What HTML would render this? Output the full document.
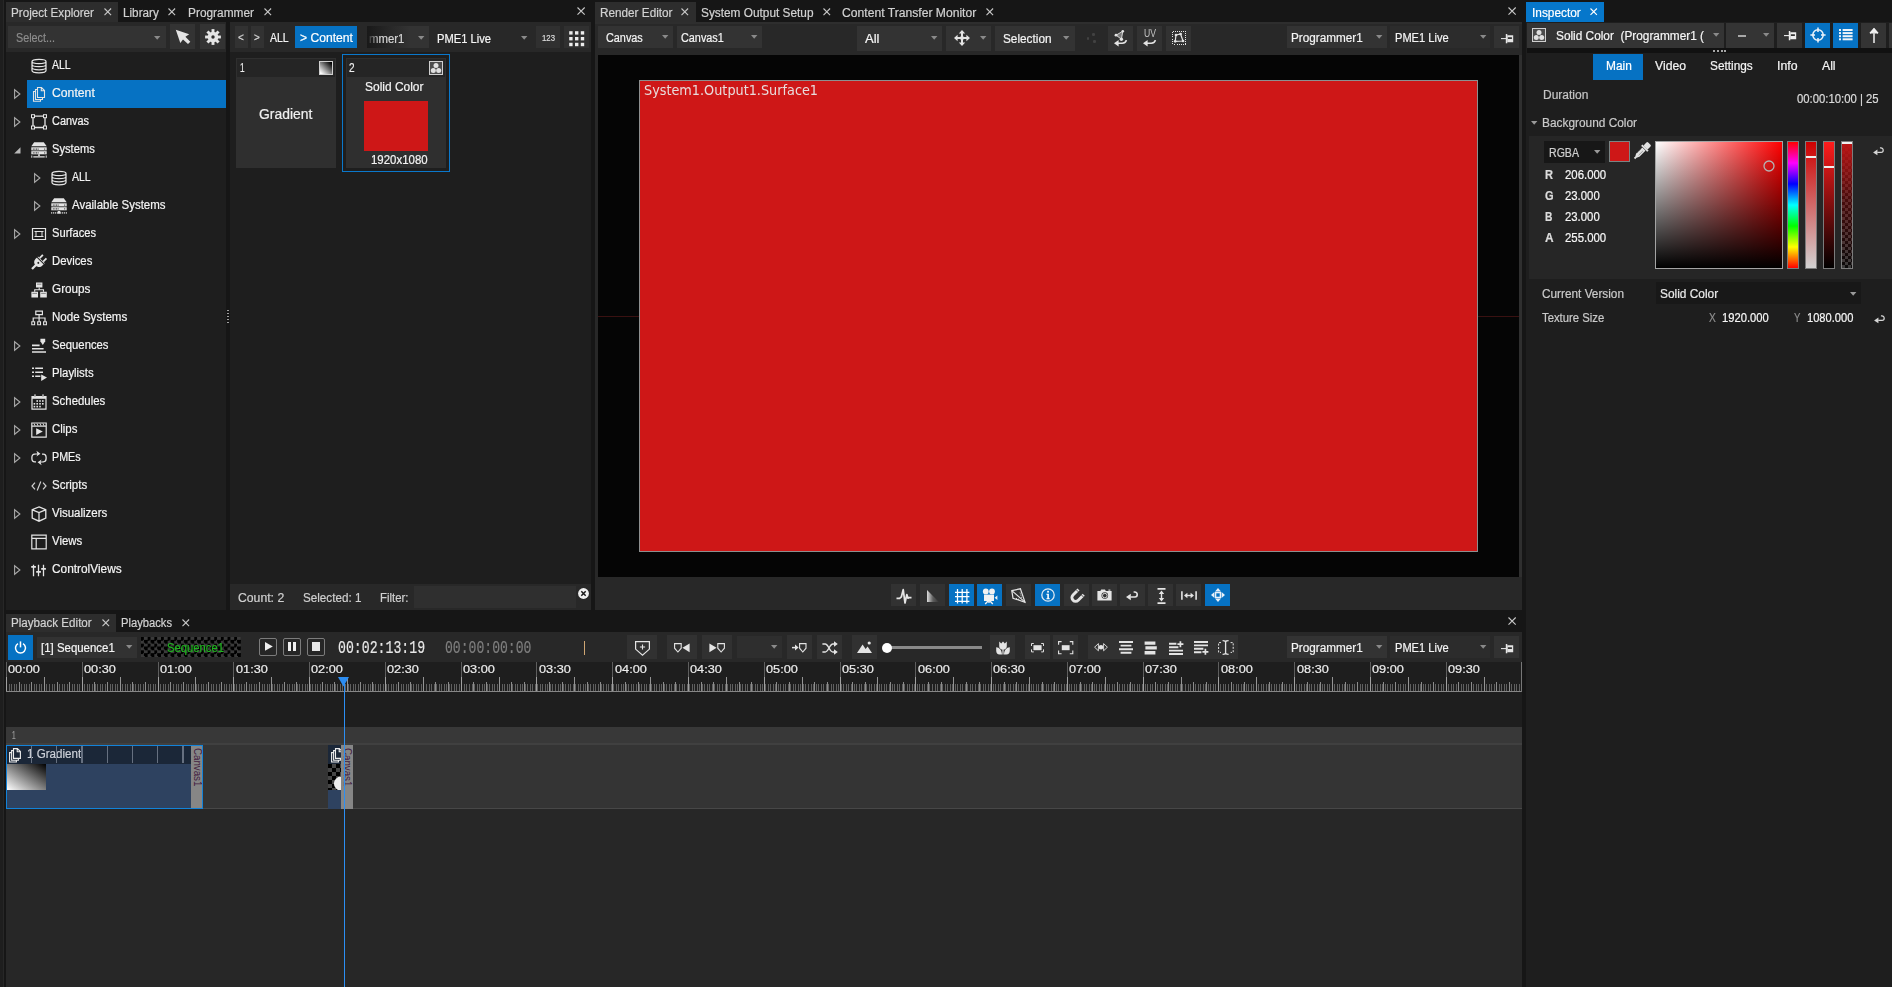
<!DOCTYPE html>
<html lang="en"><head><meta charset="utf-8"><title>UI</title><style>
html,body{margin:0;padding:0}
body{width:1892px;height:987px;position:relative;overflow:hidden;background:#161616;font-family:"Liberation Sans",sans-serif;font-size:12px}
body div,body svg{position:absolute}
svg{overflow:visible}
.t{white-space:nowrap;line-height:16px;transform-origin:0 50%;-webkit-text-stroke:0.2px}
</style></head><body>
<div style="left:0px;top:0px;width:3.3px;height:987px;background:#1e1e1e;"></div>
<div style="left:2.6px;top:0px;width:0.8px;height:987px;background:#272727;"></div>
<div style="left:6px;top:0px;width:585px;height:22px;background:#161616;"></div>
<div style="left:6px;top:2px;width:112px;height:20px;background:#2d2d2d;"></div>
<div style="left:6px;top:22px;width:220px;height:30px;background:#282828;"></div>
<div style="left:230px;top:22px;width:361px;height:30px;background:#282828;"></div>
<div style="left:6px;top:52px;width:220px;height:558px;background:#1e1e1e;"></div>
<div style="left:230px;top:52px;width:361px;height:532px;background:#1e1e1e;"></div>
<div style="left:230px;top:584px;width:361px;height:26px;background:#282828;"></div>
<div style="left:595px;top:0px;width:927px;height:22px;background:#161616;"></div>
<div style="left:595px;top:2px;width:101px;height:20px;background:#2d2d2d;"></div>
<div style="left:595px;top:22px;width:927px;height:588px;background:#282828;"></div>
<div style="left:595px;top:22px;width:927px;height:1.8px;background:#2e2e2e;"></div>
<div style="left:1519px;top:55px;width:3px;height:522px;background:#2f2f2f;"></div>
<div style="left:598px;top:55px;width:921px;height:522px;background:#050505;"></div>
<div style="left:1526px;top:0px;width:366px;height:22px;background:#161616;"></div>
<div style="left:1526px;top:22px;width:366px;height:965px;background:#1e1e1e;"></div>
<div style="left:6px;top:610px;width:1516px;height:22px;background:#161616;"></div>
<div style="left:6px;top:614px;width:110px;height:18px;background:#2d2d2d;"></div>
<div style="left:6px;top:632px;width:1516px;height:30px;background:#282828;"></div>
<div style="left:6px;top:662px;width:1516px;height:65px;background:#1e1e1e;"></div>
<div style="left:6px;top:727px;width:1516px;height:17px;background:#383838;"></div>
<div style="left:6px;top:744px;width:1516px;height:65px;background:#343434;"></div>
<div style="left:6px;top:809px;width:1516px;height:178px;background:#272727;"></div>
<div style="left:6px;top:743.4px;width:1516px;height:1.4px;background:#404040;"></div>
<div style="left:6px;top:808px;width:1516px;height:1.2px;background:#474747;"></div>
<div class="t" style="top:4.84px;font-size:12px;color:#d2d2d2;left:11.3px;transform:scaleX(0.9722);">Project Explorer</div>
<svg style="left:104px;top:8.2px;" width="7.6" height="7.6" viewBox="0 0 7.6 7.6"><path d="M0.5 0.5L7.1 7.1M7.1 0.5L0.5 7.1" stroke="#c8c8c8" stroke-width="1.1" fill="none"/></svg>
<div class="t" style="top:4.84px;font-size:12px;color:#d2d2d2;left:123.3px;transform:scaleX(0.9758);">Library</div>
<svg style="left:168.2px;top:8.2px;" width="7.6" height="7.6" viewBox="0 0 7.6 7.6"><path d="M0.5 0.5L7.1 7.1M7.1 0.5L0.5 7.1" stroke="#c8c8c8" stroke-width="1.1" fill="none"/></svg>
<div class="t" style="top:4.84px;font-size:12px;color:#d2d2d2;left:188.3px;transform:scaleX(0.9897);">Programmer</div>
<svg style="left:263.8px;top:8.2px;" width="7.6" height="7.6" viewBox="0 0 7.6 7.6"><path d="M0.5 0.5L7.1 7.1M7.1 0.5L0.5 7.1" stroke="#c8c8c8" stroke-width="1.1" fill="none"/></svg>
<svg style="left:576.9px;top:7px;" width="8.2" height="8.2" viewBox="0 0 8.2 8.2"><path d="M0.5 0.5L7.699999999999999 7.699999999999999M7.699999999999999 0.5L0.5 7.699999999999999" stroke="#c8c8c8" stroke-width="1.1" fill="none"/></svg>
<div style="left:8px;top:26px;width:158px;height:22px;background:#333333;"></div>
<div class="t" style="top:30.34px;font-size:12px;color:#8c8c8c;left:16px;transform:scaleX(0.8995);">Select...</div>
<svg style="left:153.5px;top:35.5px;" width="6.4" height="3.8" viewBox="0 0 6.4 3.8"><path d="M0 0H6.4L3.2 3.8Z" fill="#8a8a8a"/></svg>
<div style="left:170px;top:24px;width:25px;height:25px;background:#333333;"></div>
<svg style="left:170px;top:24px;" width="25" height="25" viewBox="0 0 25 25"><path d="M5.8 5.8L19.2 10.3L15.4 12.7L20.3 17.8L18 20L13 15.4L10.3 19Z" fill="#e4e4e4"/></svg>
<div style="left:200px;top:24px;width:25px;height:25px;background:#333333;"></div>
<svg style="left:204.5px;top:28.5px;" width="16" height="16" viewBox="0 0 16 16"><g transform="translate(8 8)"><rect x="-1.45" y="-7.9" width="2.9" height="4" fill="#e4e4e4" transform="rotate(0)"/><rect x="-1.45" y="-7.9" width="2.9" height="4" fill="#e4e4e4" transform="rotate(45)"/><rect x="-1.45" y="-7.9" width="2.9" height="4" fill="#e4e4e4" transform="rotate(90)"/><rect x="-1.45" y="-7.9" width="2.9" height="4" fill="#e4e4e4" transform="rotate(135)"/><rect x="-1.45" y="-7.9" width="2.9" height="4" fill="#e4e4e4" transform="rotate(180)"/><rect x="-1.45" y="-7.9" width="2.9" height="4" fill="#e4e4e4" transform="rotate(225)"/><rect x="-1.45" y="-7.9" width="2.9" height="4" fill="#e4e4e4" transform="rotate(270)"/><rect x="-1.45" y="-7.9" width="2.9" height="4" fill="#e4e4e4" transform="rotate(315)"/><circle r="5.3" fill="#e4e4e4"/><circle r="1.7" fill="#2c2c2c"/></g></svg>
<svg style="left:31px;top:58px;" width="16" height="16" viewBox="0 0 16 16"><path d="M1 3.4C1 0.6 15 0.6 15 3.4C15 6.2 1 6.2 1 3.4Z M1 3.4V12.6C1 15.6 15 15.6 15 12.6V3.4 M1 6.5C1 9.4 15 9.4 15 6.5 M1 9.6C1 12.5 15 12.5 15 9.6" fill="none" stroke="#e4e4e4" stroke-width="1.25"/></svg>
<div class="t" style="top:57.14px;font-size:12px;color:#f4f4f4;left:52px;transform:scaleX(0.8755);">ALL</div>
<div style="left:27px;top:80px;width:199px;height:28px;background:#0672c3;"></div>
<svg style="left:13.5px;top:88.9px;" width="7" height="10" viewBox="0 0 7 10"><path d="M0.6 0.7L5.9 5L0.6 9.3Z" fill="none" stroke="#a8a8a8" stroke-width="1.1"/></svg>
<svg style="left:31px;top:86px;" width="16" height="16" viewBox="0 0 16 16"><path d="M6.5 1.5H10.5L13.5 4.5V11.5H6.5Z M10.3 1.7V4.7H13.3" fill="none" stroke="#e4e4e4" stroke-width="1.1"/><path d="M6.5 3.5H4.5V13.5H11.5V11.5 M4.5 5.5H2.5V15.2H9.5V13.5" fill="none" stroke="#e4e4e4" stroke-width="1.1"/></svg>
<div class="t" style="top:85.14px;font-size:12px;color:#f4f4f4;left:52px;transform:scaleX(1.0183);">Content</div>
<svg style="left:13.5px;top:116.9px;" width="7" height="10" viewBox="0 0 7 10"><path d="M0.6 0.7L5.9 5L0.6 9.3Z" fill="none" stroke="#a8a8a8" stroke-width="1.1"/></svg>
<svg style="left:31px;top:114px;" width="16" height="16" viewBox="0 0 16 16"><path d="M2 2.2H14V13.5H2Z" fill="none" stroke="#e4e4e4" stroke-width="1.3"/><rect x="0.5" y="0.7" width="3" height="3" fill="#1e1e1e" stroke="#e4e4e4" stroke-width="1"/><rect x="0.5" y="12" width="3" height="3" fill="#1e1e1e" stroke="#e4e4e4" stroke-width="1"/><rect x="12.5" y="0.7" width="3" height="3" fill="#1e1e1e" stroke="#e4e4e4" stroke-width="1"/><rect x="12.5" y="12" width="3" height="3" fill="#1e1e1e" stroke="#e4e4e4" stroke-width="1"/></svg>
<div class="t" style="top:113.14px;font-size:12px;color:#f4f4f4;left:52px;transform:scaleX(0.9094);">Canvas</div>
<svg style="left:13.5px;top:147px;" width="7" height="7" viewBox="0 0 7 7"><path d="M6.5 0.2V6.5H0.2Z" fill="#b8b8b8"/></svg>
<svg style="left:31px;top:142px;" width="16" height="16" viewBox="0 0 16 16"><path d="M3.2 0.3H12.8L15.7 4.3H0.3Z" fill="#e4e4e4"/><path d="M0.3 5.3H15.7V8.4H0.3Z" fill="#e4e4e4"/><path d="M0.3 9.2H15.7V12.3H0.3Z" fill="#e4e4e4"/><rect x="1.8" y="6.6" width="1" height="1" fill="#1e1e1e"/><rect x="3.4" y="6.6" width="1" height="1" fill="#1e1e1e"/><rect x="5" y="6.6" width="1" height="1" fill="#1e1e1e"/><rect x="6.6" y="6.6" width="1" height="1" fill="#1e1e1e"/><rect x="13.2" y="6.6" width="1" height="1" fill="#1e1e1e"/><rect x="1.8" y="10.4" width="1" height="1" fill="#1e1e1e"/><rect x="3.4" y="10.4" width="1" height="1" fill="#1e1e1e"/><rect x="5" y="10.4" width="1" height="1" fill="#1e1e1e"/><rect x="6.6" y="10.4" width="1" height="1" fill="#1e1e1e"/><rect x="13.2" y="10.4" width="1" height="1" fill="#1e1e1e"/><path d="M7.2 12.3H8.8V14H7.2Z" fill="#e4e4e4"/><path d="M0.3 13.6H1.3V15.8H0.3Z M14.7 13.6H15.7V15.8H14.7Z M2.3 14.2H13.7V15.6H2.3Z" fill="#e4e4e4"/></svg>
<div class="t" style="top:141.14px;font-size:12px;color:#f4f4f4;left:52px;transform:scaleX(0.9301);">Systems</div>
<svg style="left:33.5px;top:172.9px;" width="7" height="10" viewBox="0 0 7 10"><path d="M0.6 0.7L5.9 5L0.6 9.3Z" fill="none" stroke="#a8a8a8" stroke-width="1.1"/></svg>
<svg style="left:51px;top:170px;" width="16" height="16" viewBox="0 0 16 16"><path d="M1 3.4C1 0.6 15 0.6 15 3.4C15 6.2 1 6.2 1 3.4Z M1 3.4V12.6C1 15.6 15 15.6 15 12.6V3.4 M1 6.5C1 9.4 15 9.4 15 6.5 M1 9.6C1 12.5 15 12.5 15 9.6" fill="none" stroke="#e4e4e4" stroke-width="1.25"/></svg>
<div class="t" style="top:169.14px;font-size:12px;color:#f4f4f4;left:72px;transform:scaleX(0.8755);">ALL</div>
<svg style="left:33.5px;top:200.9px;" width="7" height="10" viewBox="0 0 7 10"><path d="M0.6 0.7L5.9 5L0.6 9.3Z" fill="none" stroke="#a8a8a8" stroke-width="1.1"/></svg>
<svg style="left:51px;top:198px;" width="16" height="16" viewBox="0 0 16 16"><path d="M3.2 0.3H12.8L15.7 4.3H0.3Z" fill="#e4e4e4"/><path d="M0.3 5.3H15.7V8.4H0.3Z" fill="#e4e4e4"/><path d="M0.3 9.2H15.7V12.3H0.3Z" fill="#e4e4e4"/><rect x="1.8" y="6.6" width="1" height="1" fill="#1e1e1e"/><rect x="3.4" y="6.6" width="1" height="1" fill="#1e1e1e"/><rect x="5" y="6.6" width="1" height="1" fill="#1e1e1e"/><rect x="6.6" y="6.6" width="1" height="1" fill="#1e1e1e"/><rect x="13.2" y="6.6" width="1" height="1" fill="#1e1e1e"/><rect x="1.8" y="10.4" width="1" height="1" fill="#1e1e1e"/><rect x="3.4" y="10.4" width="1" height="1" fill="#1e1e1e"/><rect x="5" y="10.4" width="1" height="1" fill="#1e1e1e"/><rect x="6.6" y="10.4" width="1" height="1" fill="#1e1e1e"/><rect x="13.2" y="10.4" width="1" height="1" fill="#1e1e1e"/><path d="M0.3 14H1.2V15.8H0.3Z M2.3 14H3.2V15.8H2.3Z M4.3 14H5.2V15.8H4.3Z M10.8 14H11.7V15.8H10.8Z M12.8 14H13.7V15.8H12.8Z M14.8 14H15.7V15.8H14.8Z M6.2 15.8V14.6C6.2 12.6 9.8 12.6 9.8 14.6V15.8Z" fill="#e4e4e4"/></svg>
<div class="t" style="top:197.14px;font-size:12px;color:#f4f4f4;left:72px;transform:scaleX(0.9558);">Available Systems</div>
<svg style="left:13.5px;top:228.9px;" width="7" height="10" viewBox="0 0 7 10"><path d="M0.6 0.7L5.9 5L0.6 9.3Z" fill="none" stroke="#a8a8a8" stroke-width="1.1"/></svg>
<svg style="left:31px;top:226px;" width="16" height="16" viewBox="0 0 16 16"><path d="M1.5 2.5H14.5V13.5H1.5Z" fill="none" stroke="#e4e4e4" stroke-width="1.2"/><path d="M3.5 5.5H12.5M3.5 10.5H12.5M5 5.5V10.5M11 5.5V10.5" fill="none" stroke="#e4e4e4" stroke-width="1"/></svg>
<div class="t" style="top:225.14px;font-size:12px;color:#f4f4f4;left:52px;transform:scaleX(0.9291);">Surfaces</div>
<svg style="left:31px;top:254px;" width="16" height="16" viewBox="0 0 16 16"><path d="M0.2 14.2L4.4 10L6 11.6L1.8 15.8Z" fill="#e4e4e4"/><g transform="rotate(45 9 7.2)"><path d="M4.2 5.2H13.8V8.6C13.8 11.6 11.6 13.4 9 13.4C6.4 13.4 4.2 11.6 4.2 8.6Z" fill="#e4e4e4"/><path d="M5.6 0.6H7.4V5.2H5.6Z M10.6 0.6H12.4V5.2H10.6Z" fill="#e4e4e4"/><rect x="3.6" y="6" width="11" height="0.9" fill="#1e1e1e"/><circle cx="9" cy="9.6" r="1" fill="#1e1e1e"/></g></svg>
<div class="t" style="top:253.14px;font-size:12px;color:#f4f4f4;left:52px;transform:scaleX(0.9441);">Devices</div>
<svg style="left:31px;top:282px;" width="16" height="16" viewBox="0 0 16 16"><path d="M5 0.6H11.4V5.6H5Z M0.4 9.8H7V15.4H0.4Z M9.2 9.8H15.8V15.4H9.2Z" fill="#e4e4e4"/><path d="M8.2 5.6V7.7M3.7 9.8V7.7H12.5V9.8" fill="none" stroke="#e4e4e4" stroke-width="1.1"/><path d="M6 2.2H10.4M1.4 11.4H6M10.2 11.4H14.8" stroke="#1e1e1e" stroke-width="0.8" opacity="0.6"/></svg>
<div class="t" style="top:281.14px;font-size:12px;color:#f4f4f4;left:52px;transform:scaleX(0.9782);">Groups</div>
<svg style="left:31px;top:310px;" width="16" height="16" viewBox="0 0 16 16"><path d="M4.8 1.2H11.4V4.6H4.8Z M8.1 4.6V8 M2.2 11.6V8H14V11.6 M8.1 8V11.6" fill="none" stroke="#e4e4e4" stroke-width="1.2"/><path d="M0.8 11.8H3.6V14.8H0.8Z M6.7 11.8H9.5V14.8H6.7Z M12.6 11.8H15.4V14.8H12.6Z" fill="none" stroke="#e4e4e4" stroke-width="1.1"/></svg>
<div class="t" style="top:309.14px;font-size:12px;color:#f4f4f4;left:52px;transform:scaleX(0.9650);">Node Systems</div>
<svg style="left:13.5px;top:340.9px;" width="7" height="10" viewBox="0 0 7 10"><path d="M0.6 0.7L5.9 5L0.6 9.3Z" fill="none" stroke="#a8a8a8" stroke-width="1.1"/></svg>
<svg style="left:31px;top:338px;" width="16" height="16" viewBox="0 0 16 16"><path d="M1 6.6H8.6V8.2H1Z M1 9.9H12.6V11.5H1Z M1 13.2H15V14.8H1Z" fill="#e4e4e4"/><path d="M9.4 0.8H14.2V3.2L11.8 7L9.4 3.2Z" fill="#e4e4e4"/></svg>
<div class="t" style="top:337.14px;font-size:12px;color:#f4f4f4;left:52px;transform:scaleX(0.9409);">Sequences</div>
<svg style="left:31px;top:366px;" width="16" height="16" viewBox="0 0 16 16"><path d="M1 1.4H3V3H1Z M4.2 1.4H12V3H4.2Z M1 5.4H3V7H1Z M4.2 5.4H12V7H4.2Z M1 9.4H3V11H1Z M4.2 9.4H9.4V11H4.2Z" fill="#e4e4e4"/><path d="M10.2 8.4L16 11.6L10.2 14.9Z" fill="#e4e4e4"/></svg>
<div class="t" style="top:365.14px;font-size:12px;color:#f4f4f4;left:52px;transform:scaleX(0.9451);">Playlists</div>
<svg style="left:13.5px;top:396.9px;" width="7" height="10" viewBox="0 0 7 10"><path d="M0.6 0.7L5.9 5L0.6 9.3Z" fill="none" stroke="#a8a8a8" stroke-width="1.1"/></svg>
<svg style="left:31px;top:394px;" width="16" height="16" viewBox="0 0 16 16"><path d="M1 2.6H15V15.2H1Z" fill="none" stroke="#e4e4e4" stroke-width="1.2"/><path d="M1 2.6H15V4.8H1Z" fill="#e4e4e4"/><path d="M4 0.4V3M12 0.4V3" fill="none" stroke="#e4e4e4" stroke-width="1.6"/><path d="M4 1.2V2.6M12 1.2V2.6" stroke="#1e1e1e" stroke-width="0.6"/><rect x="5.4" y="6.2" width="1.6" height="1.6" fill="#e4e4e4"/><rect x="8.2" y="6.2" width="1.6" height="1.6" fill="#e4e4e4"/><rect x="11" y="6.2" width="1.6" height="1.6" fill="#e4e4e4"/><rect x="2.6" y="9" width="1.6" height="1.6" fill="#e4e4e4"/><rect x="5.4" y="9" width="1.6" height="1.6" fill="#e4e4e4"/><rect x="8.2" y="9" width="1.6" height="1.6" fill="#e4e4e4"/><rect x="11" y="9" width="1.6" height="1.6" fill="#e4e4e4"/><rect x="2.6" y="11.8" width="1.6" height="1.6" fill="#e4e4e4"/><rect x="5.4" y="11.8" width="1.6" height="1.6" fill="#e4e4e4"/><rect x="8.2" y="11.8" width="1.6" height="1.6" fill="#e4e4e4"/></svg>
<div class="t" style="top:393.14px;font-size:12px;color:#f4f4f4;left:52px;transform:scaleX(0.9492);">Schedules</div>
<svg style="left:13.5px;top:424.9px;" width="7" height="10" viewBox="0 0 7 10"><path d="M0.6 0.7L5.9 5L0.6 9.3Z" fill="none" stroke="#a8a8a8" stroke-width="1.1"/></svg>
<svg style="left:31px;top:422px;" width="16" height="16" viewBox="0 0 16 16"><path d="M0.8 1H15.2V15.2H0.8Z M0.8 4.2H15.2" fill="none" stroke="#e4e4e4" stroke-width="1.2"/><path d="M5.2 6.2L11.8 9.6L5.2 13Z" fill="#e4e4e4"/><path d="M3 1.4L4 3.8M6 1.4L7 3.8M9 1.4L10 3.8M12 1.4L13 3.8" fill="none" stroke="#e4e4e4" stroke-width="0.9"/></svg>
<div class="t" style="top:421.14px;font-size:12px;color:#f4f4f4;left:52px;transform:scaleX(0.9523);">Clips</div>
<svg style="left:13.5px;top:452.9px;" width="7" height="10" viewBox="0 0 7 10"><path d="M0.6 0.7L5.9 5L0.6 9.3Z" fill="none" stroke="#a8a8a8" stroke-width="1.1"/></svg>
<svg style="left:31px;top:450px;" width="16" height="16" viewBox="0 0 16 16"><path d="M4.6 4.2H3.6C1.8 4.2 0.9 5.4 0.9 7.4V8.4C0.9 10.6 2 11.8 3.8 11.8H5" fill="none" stroke="#e4e4e4" stroke-width="1.3"/><path d="M5.4 0.8L9.4 3.8L5.4 6.6L6.4 4.4H4.4V3.4H6.4Z" fill="#e4e4e4"/><path d="M11.4 11.8H12.4C14.2 11.8 15.1 10.6 15.1 8.6V7.6C15.1 5.4 14 4.2 12.2 4.2H11" fill="none" stroke="#e4e4e4" stroke-width="1.3"/><path d="M10.6 15.2L6.6 12.2L10.6 9.4L9.6 11.4H11.6V12.6H9.6Z" fill="#e4e4e4"/></svg>
<div class="t" style="top:449.14px;font-size:12px;color:#f4f4f4;left:52px;transform:scaleX(0.8933);">PMEs</div>
<svg style="left:31px;top:478px;" width="16" height="16" viewBox="0 0 16 16"><path d="M4 4.6L1 8L4 11.4 M12 4.6L15 8L12 11.4 M9.8 3.6L6.2 12.4" fill="none" stroke="#cfcfcf" stroke-width="1.2"/></svg>
<div class="t" style="top:477.14px;font-size:12px;color:#f4f4f4;left:52px;transform:scaleX(0.9595);">Scripts</div>
<svg style="left:13.5px;top:508.9px;" width="7" height="10" viewBox="0 0 7 10"><path d="M0.6 0.7L5.9 5L0.6 9.3Z" fill="none" stroke="#a8a8a8" stroke-width="1.1"/></svg>
<svg style="left:31px;top:506px;" width="16" height="16" viewBox="0 0 16 16"><path d="M8 0.9L14.8 3.6V12.2L8 15.2L1.2 12.2V3.6Z M1.4 3.8L8 6.6L14.6 3.8 M8 6.6V15" fill="none" stroke="#e4e4e4" stroke-width="1.3"/></svg>
<div class="t" style="top:505.14px;font-size:12px;color:#f4f4f4;left:52px;transform:scaleX(0.9548);">Visualizers</div>
<svg style="left:31px;top:534px;" width="16" height="16" viewBox="0 0 16 16"><path d="M0.8 1.2H15.2V14.8H0.8Z M0.8 4.4H15.2 M5.2 4.4V14.8" fill="none" stroke="#e4e4e4" stroke-width="1.2"/></svg>
<div class="t" style="top:533.14px;font-size:12px;color:#f4f4f4;left:52px;transform:scaleX(0.9498);">Views</div>
<svg style="left:13.5px;top:564.9px;" width="7" height="10" viewBox="0 0 7 10"><path d="M0.6 0.7L5.9 5L0.6 9.3Z" fill="none" stroke="#a8a8a8" stroke-width="1.1"/></svg>
<svg style="left:31px;top:562px;" width="16" height="16" viewBox="0 0 16 16"><path d="M2.5 2.8V14.3 M7.5 2.8V14.3 M12.5 2.8V14.3" fill="none" stroke="#e4e4e4" stroke-width="1.3"/><path d="M0.2 4.9H4.9 M5.2 9.9H9.9 M10.2 6.9H14.9" fill="none" stroke="#e4e4e4" stroke-width="1.6"/></svg>
<div class="t" style="top:561.14px;font-size:12px;color:#f4f4f4;left:52px;transform:scaleX(0.9889);">ControlViews</div>
<div style="left:227.4px;top:309.6px;width:1.3px;height:1.4px;background:#a0a0a0;"></div>
<div style="left:227.4px;top:312.7px;width:1.3px;height:1.4px;background:#a0a0a0;"></div>
<div style="left:227.4px;top:315.8px;width:1.3px;height:1.4px;background:#a0a0a0;"></div>
<div style="left:227.4px;top:318.9px;width:1.3px;height:1.4px;background:#a0a0a0;"></div>
<div style="left:227.4px;top:322px;width:1.3px;height:1.4px;background:#a0a0a0;"></div>
<div style="left:235px;top:26px;width:13px;height:22px;background:#323232;"></div>
<div class="t" style="top:29.93px;font-size:10px;color:#d8d8d8;left:238.4px;transform:scaleX(0.9925);">&lt;</div>
<div style="left:251px;top:26px;width:13px;height:22px;background:#323232;"></div>
<div class="t" style="top:29.93px;font-size:10px;color:#d8d8d8;left:254.2px;transform:scaleX(0.9925);">&gt;</div>
<div class="t" style="top:29.64px;font-size:12px;color:#f4f4f4;left:270.2px;transform:scaleX(0.8755);">ALL</div>
<div style="left:295px;top:26px;width:62px;height:22px;background:#0672c3;"></div>
<div class="t" style="top:29.64px;font-size:12px;color:#ffffff;left:300.2px;transform:scaleX(1.0119);">&gt; Content</div>
<div style="left:367px;top:26px;width:62px;height:22px;background:linear-gradient(90deg,#191919 0,#2b2b2b 45%,#333 70%);"></div>
<div class="t" style="top:31.24px;font-size:12px;color:#d4d4d4;left:369.3px;transform:scaleX(0.9479);-webkit-mask-image:linear-gradient(90deg,rgba(0,0,0,.15),#000 30%);mask-image:linear-gradient(90deg,rgba(0,0,0,.15),#000 30%);">mmer1</div>
<svg style="left:417.5px;top:36.2px;" width="6.4" height="3.8" viewBox="0 0 6.4 3.8"><path d="M0 0H6.4L3.2 3.8Z" fill="#8a8a8a"/></svg>
<div style="left:430px;top:26px;width:101px;height:22px;background:#282828;"></div>
<div class="t" style="top:31.24px;font-size:12px;color:#f4f4f4;left:437.3px;transform:scaleX(0.9305);">PME1 Live</div>
<svg style="left:521px;top:36.2px;" width="6.4" height="3.8" viewBox="0 0 6.4 3.8"><path d="M0 0H6.4L3.2 3.8Z" fill="#8a8a8a"/></svg>
<div style="left:536px;top:26px;width:24px;height:22px;background:#303030;"></div>
<div class="t" style="top:29.88px;font-size:9px;color:#dcdcdc;left:541.6px;transform:scaleX(0.8649);">123</div>
<div style="left:564px;top:26px;width:25px;height:22px;background:#303030;"></div>
<svg style="left:569px;top:30.5px;" width="15.2" height="15.2" viewBox="0 0 15.2 15.2"><rect x="0.2" y="0.2" width="3.4" height="3.4" fill="#ececec"/><rect x="0.2" y="6" width="3.4" height="3.4" fill="#ececec"/><rect x="0.2" y="11.8" width="3.4" height="3.4" fill="#ececec"/><rect x="6" y="0.2" width="3.4" height="3.4" fill="#ececec"/><rect x="6" y="6" width="3.4" height="3.4" fill="#ececec"/><rect x="6" y="11.8" width="3.4" height="3.4" fill="#ececec"/><rect x="11.8" y="0.2" width="3.4" height="3.4" fill="#ececec"/><rect x="11.8" y="6" width="3.4" height="3.4" fill="#ececec"/><rect x="11.8" y="11.8" width="3.4" height="3.4" fill="#ececec"/></svg>
<div style="left:236px;top:58px;width:100px;height:110px;background:#2f2f2f;"></div>
<div style="left:237px;top:59px;width:98px;height:18px;background:#252525;"></div>
<div class="t" style="top:59.64px;font-size:12px;color:#f0f0f0;left:239.8px;transform:scaleX(0.6879);">1</div>
<svg style="left:319px;top:61px;" width="14" height="14" viewBox="0 0 14 14"><defs><linearGradient id="gi" x1="0" y1="1" x2="1" y2="0"><stop offset="0.1" stop-color="#fff"/><stop offset="0.9" stop-color="#000"/></linearGradient></defs><rect x="0.5" y="0.5" width="13" height="13" fill="url(#gi)" stroke="#d0d0d0"/></svg>
<div class="t" style="top:104.75px;font-size:14px;color:#f0f0f0;left:259.3px;line-height:18px;transform:scaleX(0.9925);">Gradient</div>
<div style="left:342px;top:54px;width:106px;height:116px;background:none;border:1px solid #0a78cc;"></div>
<div style="left:346px;top:58px;width:100px;height:110px;background:#2f2f2f;"></div>
<div style="left:347px;top:59px;width:98px;height:18px;background:#252525;"></div>
<div class="t" style="top:59.64px;font-size:12px;color:#f0f0f0;left:349px;transform:scaleX(0.8374);">2</div>
<svg style="left:429px;top:61px;" width="14" height="14" viewBox="0 0 14 14"><rect x="0.5" y="0.5" width="13" height="13" fill="#4c4c4c" stroke="#d0d0d0" stroke-width="1"/><circle cx="7" cy="4.4" r="2.5" fill="#e0e0e0"/><circle cx="4.3" cy="9.4" r="2.5" fill="#e0e0e0"/><circle cx="9.7" cy="9.4" r="2.5" fill="#e0e0e0"/></svg>
<div class="t" style="top:78.64px;font-size:12px;color:#f4f4f4;left:365.3px;transform:scaleX(0.9965);">Solid Color</div>
<div style="left:364px;top:101px;width:64px;height:50px;background:#ce1717;"></div>
<div class="t" style="top:151.74px;font-size:12px;color:#f4f4f4;left:370.6px;transform:scaleX(0.9530);">1920x1080</div>
<div class="t" style="top:589.84px;font-size:12px;color:#d0d0d0;left:237.6px;transform:scaleX(1.0182);">Count: 2</div>
<div class="t" style="top:589.84px;font-size:12px;color:#d0d0d0;left:302.5px;transform:scaleX(0.9726);">Selected: 1</div>
<div class="t" style="top:589.84px;font-size:12px;color:#d0d0d0;left:380px;transform:scaleX(0.9500);">Filter:</div>
<div style="left:414px;top:586px;width:162px;height:21.5px;background:#2f2f2f;"></div>
<svg style="left:577.5px;top:588px;" width="11" height="11" viewBox="0 0 11 11"><circle cx="5.5" cy="5.5" r="5.4" fill="#f0f0f0"/><path d="M3.3 3.3L7.7 7.7M7.7 3.3L3.3 7.7" stroke="#1a1a1a" stroke-width="1.5"/></svg>
<div class="t" style="top:4.84px;font-size:12px;color:#d2d2d2;left:600.2px;transform:scaleX(0.9791);">Render Editor</div>
<svg style="left:681px;top:8.2px;" width="7.6" height="7.6" viewBox="0 0 7.6 7.6"><path d="M0.5 0.5L7.1 7.1M7.1 0.5L0.5 7.1" stroke="#c8c8c8" stroke-width="1.1" fill="none"/></svg>
<div class="t" style="top:4.84px;font-size:12px;color:#d2d2d2;left:701px;transform:scaleX(0.9863);">System Output Setup</div>
<svg style="left:823px;top:8.2px;" width="7.6" height="7.6" viewBox="0 0 7.6 7.6"><path d="M0.5 0.5L7.1 7.1M7.1 0.5L0.5 7.1" stroke="#c8c8c8" stroke-width="1.1" fill="none"/></svg>
<div class="t" style="top:4.84px;font-size:12px;color:#d2d2d2;left:842.2px;transform:scaleX(1.0118);">Content Transfer Monitor</div>
<svg style="left:986px;top:8.2px;" width="7.6" height="7.6" viewBox="0 0 7.6 7.6"><path d="M0.5 0.5L7.1 7.1M7.1 0.5L0.5 7.1" stroke="#c8c8c8" stroke-width="1.1" fill="none"/></svg>
<svg style="left:1507.6px;top:7px;" width="8.2" height="8.2" viewBox="0 0 8.2 8.2"><path d="M0.5 0.5L7.699999999999999 7.699999999999999M7.699999999999999 0.5L0.5 7.699999999999999" stroke="#c8c8c8" stroke-width="1.1" fill="none"/></svg>
<div style="left:598px;top:26px;width:75px;height:22px;background:#333333;"></div>
<div class="t" style="top:29.54px;font-size:12px;color:#f4f4f4;left:606.2px;transform:scaleX(0.9045);">Canvas</div>
<svg style="left:661.6px;top:35.2px;" width="6.4" height="3.8" viewBox="0 0 6.4 3.8"><path d="M0 0H6.4L3.2 3.8Z" fill="#8a8a8a"/></svg>
<div style="left:677px;top:26px;width:85px;height:22px;background:#333333;"></div>
<div class="t" style="top:29.54px;font-size:12px;color:#f4f4f4;left:680.7px;transform:scaleX(0.9034);">Canvas1</div>
<svg style="left:750.8px;top:35.2px;" width="6.4" height="3.8" viewBox="0 0 6.4 3.8"><path d="M0 0H6.4L3.2 3.8Z" fill="#8a8a8a"/></svg>
<div style="left:857px;top:26px;width:85px;height:25px;background:#333333;"></div>
<div class="t" style="top:30.54px;font-size:12px;color:#f4f4f4;left:865px;transform:scaleX(1.0867);">All</div>
<svg style="left:930.5px;top:36px;" width="6.4" height="3.8" viewBox="0 0 6.4 3.8"><path d="M0 0H6.4L3.2 3.8Z" fill="#8a8a8a"/></svg>
<div style="left:946px;top:26px;width:45px;height:25px;background:#333333;"></div>
<svg style="left:954px;top:30px;" width="16" height="16" viewBox="0 0 16 16"><g transform="translate(8 8)"><path d="M0 -8L3.2 -4.4H1V-1H-1V-4.4H-3.2Z" fill="#e4e4e4" transform="rotate(0)"/><path d="M0 -8L3.2 -4.4H1V-1H-1V-4.4H-3.2Z" fill="#e4e4e4" transform="rotate(90)"/><path d="M0 -8L3.2 -4.4H1V-1H-1V-4.4H-3.2Z" fill="#e4e4e4" transform="rotate(180)"/><path d="M0 -8L3.2 -4.4H1V-1H-1V-4.4H-3.2Z" fill="#e4e4e4" transform="rotate(270)"/><rect x="-1.6" y="-1.6" width="3.2" height="3.2" fill="#e4e4e4"/></g></svg>
<svg style="left:980px;top:36px;" width="6.4" height="3.8" viewBox="0 0 6.4 3.8"><path d="M0 0H6.4L3.2 3.8Z" fill="#8a8a8a"/></svg>
<div style="left:995px;top:26px;width:80px;height:25px;background:#333333;"></div>
<div class="t" style="top:30.54px;font-size:12px;color:#f4f4f4;left:1003px;transform:scaleX(0.9823);">Selection</div>
<svg style="left:1063.4px;top:36px;" width="6.4" height="3.8" viewBox="0 0 6.4 3.8"><path d="M0 0H6.4L3.2 3.8Z" fill="#8a8a8a"/></svg>
<div style="left:1086.8px;top:37.4px;width:2.4px;height:2.4px;background:#424242;border-radius:50%;"></div>
<div style="left:1092.4px;top:33.4px;width:2.4px;height:2.4px;background:#424242;border-radius:50%;"></div>
<div style="left:1093.4px;top:40.4px;width:2.4px;height:2.4px;background:#424242;border-radius:50%;"></div>
<div style="left:1108px;top:26px;width:25px;height:25px;background:#323232;"></div>
<svg style="left:1113px;top:30px;" width="15" height="17" viewBox="0 0 15 17"><path d="M9.8 1.2L3.1 5.2L8.4 9.2Z" fill="#7a7a7a" stroke="#e4e4e4" stroke-width="0.9"/><circle cx="9.8" cy="1.3" r="1.3" fill="#e4e4e4"/><circle cx="3" cy="5.2" r="1.4" fill="#e4e4e4"/><circle cx="8.4" cy="9.2" r="1.7" fill="#e4e4e4"/><g transform="translate(1 10)"><path d="M0 3.2L4.6 0V6.4Z" fill="#e4e4e4"/><path d="M4 3.2H8.2C10.6 3.2 12 2 12.4 0.2" fill="none" stroke="#e4e4e4" stroke-width="1.6"/></g></svg>
<div style="left:1137px;top:26px;width:25px;height:25px;background:#323232;"></div>
<div class="t" style="top:26.37px;font-size:10.2px;color:#c4c4c4;left:1143.9px;transform:scaleX(0.8477);-webkit-text-stroke:0;">UV</div>
<svg style="left:1143px;top:40px;" width="13" height="6.4" viewBox="0 0 13 6.4"><path d="M0 3.2L4.6 0V6.4Z" fill="#e4e4e4"/><path d="M4 3.2H8.2C10.6 3.2 12 2 12.4 0.2" fill="none" stroke="#e4e4e4" stroke-width="1.6"/></svg>
<div style="left:1166px;top:26px;width:25px;height:25px;background:#323232;"></div>
<svg style="left:1172px;top:31px;" width="14.5" height="14.5" viewBox="0 0 14.5 14.5"><rect x="0.5" y="0.5" width="13.4" height="13.4" fill="none" stroke="#e4e4e4" stroke-width="1" stroke-dasharray="1 1.07" shape-rendering="crispEdges"/><path d="M4 4L8.6 3L11 10L3.2 10.3Z" fill="none" stroke="#e4e4e4" stroke-width="1.2"/><circle cx="4" cy="4" r="1.35" fill="#e4e4e4"/><circle cx="8.6" cy="3" r="1.35" fill="#e4e4e4"/><circle cx="11" cy="10" r="1.35" fill="#e4e4e4"/><circle cx="3.2" cy="10.3" r="1.35" fill="#e4e4e4"/></svg>
<div style="left:1287px;top:26px;width:100px;height:22px;background:#333333;"></div>
<div class="t" style="top:29.54px;font-size:12px;color:#f4f4f4;left:1291.3px;transform:scaleX(0.9787);">Programmer1</div>
<svg style="left:1376px;top:35.2px;" width="6.4" height="3.8" viewBox="0 0 6.4 3.8"><path d="M0 0H6.4L3.2 3.8Z" fill="#8a8a8a"/></svg>
<div style="left:1390px;top:26px;width:100px;height:22px;background:#2c2c2c;"></div>
<div class="t" style="top:29.54px;font-size:12px;color:#f4f4f4;left:1395.4px;transform:scaleX(0.9236);">PME1 Live</div>
<svg style="left:1480px;top:35.2px;" width="6.4" height="3.8" viewBox="0 0 6.4 3.8"><path d="M0 0H6.4L3.2 3.8Z" fill="#8a8a8a"/></svg>
<div style="left:1494px;top:26px;width:25px;height:22px;background:#323232;"></div>
<svg style="left:1500.9px;top:33.9px;" width="13" height="9.4" viewBox="0 0 13 9.4"><path d="M0 4.6H5" stroke="#e4e4e4" stroke-width="1.1"/><rect x="4.8" y="0" width="1.5" height="9.3" fill="#e4e4e4"/><path fill-rule="evenodd" d="M6.2 1.2H12.2V8.2H6.2Z M6.9 3.3H10.9V4.9H6.9Z" fill="#e4e4e4"/></svg>
<div style="left:598px;top:316px;width:921px;height:1px;background:#3a1111;"></div>
<div style="left:639px;top:80px;width:839px;height:472px;background:#ce1717;box-sizing:border-box;border:1px solid #8d8f8f;"></div>
<div class="t" style="top:80.96px;font-size:14px;color:#e8dcdc;left:644.3px;font-family:'DejaVu Sans',sans-serif;line-height:18px;transform:scaleX(0.9168);-webkit-text-stroke:0;">System1.Output1.Surface1</div>
<div style="left:891px;top:584px;width:25px;height:22px;background:#323232;"></div>
<div style="left:920px;top:584px;width:25px;height:22px;background:#323232;"></div>
<div style="left:949px;top:584px;width:25px;height:22px;background:#0672c3;"></div>
<div style="left:977px;top:584px;width:25px;height:22px;background:#0672c3;"></div>
<div style="left:1006px;top:584px;width:25px;height:22px;background:#323232;"></div>
<div style="left:1035px;top:584px;width:25px;height:22px;background:#0672c3;"></div>
<div style="left:1064px;top:584px;width:25px;height:22px;background:#323232;"></div>
<div style="left:1092px;top:584px;width:25px;height:22px;background:#323232;"></div>
<div style="left:1120px;top:584px;width:25px;height:22px;background:#323232;"></div>
<div style="left:1148px;top:584px;width:25px;height:22px;background:#323232;"></div>
<div style="left:1176px;top:584px;width:25px;height:22px;background:#323232;"></div>
<div style="left:1205px;top:584px;width:25px;height:22px;background:#0672c3;"></div>
<svg style="left:895.5px;top:587.5px;" width="16" height="16" viewBox="0 0 16 16"><path d="M0.5 10.4H3.6L5.4 8.8L7.2 1.6L9 15L10.8 6.6L12 10.2L13 9.6H15.5" fill="none" stroke="#e4e4e4" stroke-width="1.75" stroke-linejoin="round"/></svg>
<svg style="left:927px;top:589.5px;" width="12" height="12" viewBox="0 0 12 12"><defs><linearGradient id="gt" x1="0" y1="0" x2="1" y2="0"><stop offset="0" stop-color="#dedede"/><stop offset="0.5" stop-color="#5c5c5c"/><stop offset="1" stop-color="#343434"/></linearGradient></defs><path d="M0 0L12 12H0Z" fill="url(#gt)"/></svg>
<svg style="left:955px;top:589px;" width="15" height="15" viewBox="0 0 15 15"><path d="M2.5 0V14.4M7.2 0V14.4M11.9 0V14.4M0 3.3H14.4M0 7.6H14.4M0 12.3H14.4" stroke="#fff" stroke-width="1.25"/></svg>
<svg style="left:981.5px;top:587.5px;" width="16" height="16" viewBox="0 0 16 16"><circle cx="3.8" cy="3.4" r="2.9" fill="#f2f2f2"/><circle cx="10" cy="3.4" r="2.9" fill="#f2f2f2"/><rect x="2" y="6.6" width="10" height="6.4" fill="#f2f2f2"/><path d="M12.6 9.8L15.4 7.6V12L12.6 9.8Z" fill="#f2f2f2"/><path d="M6 13L3.2 16M8 13L10.8 16M7 13V15" stroke="#f2f2f2" stroke-width="1.4"/></svg>
<svg style="left:1011px;top:588px;" width="15" height="15" viewBox="0 0 15 15"><path d="M0.8 2.6L9.4 0.8L14 14.2L2 10.2Z" fill="none" stroke="#e4e4e4" stroke-width="1.2"/><path d="M0.8 2.6L14 14.2" stroke="#e4e4e4" stroke-width="1.1"/><path d="M9 4.6L11 10.6M5 10.4L8.6 11.6" stroke="#e4e4e4" stroke-width="1" stroke-dasharray="1 1.2"/></svg>
<svg style="left:1040.5px;top:588px;" width="14" height="14" viewBox="0 0 14 14"><circle cx="7" cy="7" r="6.2" fill="none" stroke="#dfe9f2" stroke-width="1.3"/><rect x="6.2" y="2.8" width="1.7" height="1.8" fill="#fff"/><path d="M5.4 5.8H7.9V10.2H8.8V11.2H5.4V10.2H6.3V6.8H5.4Z" fill="#fff"/></svg>
<svg style="left:1068.5px;top:587.5px;" width="16" height="16" viewBox="0 0 16 16"><g transform="translate(7.6 8.6) rotate(45)"><path d="M-3.7 -6.4V1.4A3.7 3.7 0 0 0 3.7 1.4V-6.4" fill="none" stroke="#e4e4e4" stroke-width="2.9"/><path d="M-5.3 -4.6H-2.1M2.1 -4.6H5.3" stroke="#323232" stroke-width="0.8"/></g></svg>
<svg style="left:1097px;top:589px;" width="15" height="12" viewBox="0 0 15 12"><path d="M0.4 2H3.4L4.2 0.6H8L8.8 2H14.6V11.6H0.4Z" fill="#e4e4e4"/><circle cx="7.8" cy="6.6" r="3.3" fill="#323232"/><circle cx="7.8" cy="6.6" r="2.3" fill="none" stroke="#e4e4e4" stroke-width="0.9"/><rect x="11.4" y="0.6" width="2" height="1" fill="#e4e4e4"/></svg>
<svg style="left:1126px;top:590.5px;" width="12" height="10" viewBox="0 0 12 10"><path d="M4.6 6H9C10.8 6 11.2 4.8 11.2 3.6C11.2 2.2 10.4 1 8.6 1H7.6" fill="none" stroke="#e4e4e4" stroke-width="1.6"/><path d="M0 6L4.8 2.8V9.2Z" fill="#e4e4e4"/></svg>
<svg style="left:1156.5px;top:587.5px;" width="9" height="16" viewBox="0 0 9 16"><path d="M0.5 0.9H8.5M0.5 15.1H8.5" stroke="#e4e4e4" stroke-width="1.6"/><path d="M4.5 4V12" stroke="#e4e4e4" stroke-width="1.4"/><path d="M4.5 2.6L7.2 6H1.8ZM4.5 13.4L7.2 10H1.8Z" fill="#e4e4e4"/></svg>
<svg style="left:1180.5px;top:591px;" width="16" height="9" viewBox="0 0 16 9"><path d="M0.9 0.3V8.7M15.1 0.3V8.7" stroke="#e4e4e4" stroke-width="1.6"/><path d="M5 4.5H11" stroke="#e4e4e4" stroke-width="1.4"/><path d="M3 4.5L6.4 1.8V7.2ZM13 4.5L9.6 1.8V7.2Z" fill="#e4e4e4"/></svg>
<svg style="left:1210.5px;top:588px;" width="14" height="14" viewBox="0 0 14 14"><path d="M7 0L10 3.4H4ZM7 14L10 10.6H4ZM0 7L3.4 4V10ZM14 7L10.6 4V10Z" fill="#e8f0f8"/><rect x="4.6" y="4.6" width="4.8" height="4.8" fill="none" stroke="#e8f0f8" stroke-width="1.4"/></svg>
<div style="left:1526px;top:2px;width:78px;height:20px;background:#0677cb;"></div>
<div class="t" style="top:4.84px;font-size:12px;color:#ffffff;left:1531.7px;transform:scaleX(0.9887);">Inspector</div>
<svg style="left:1590px;top:8.3px;" width="7.4" height="7.4" viewBox="0 0 7.4 7.4"><path d="M0.5 0.5L6.9 6.9M6.9 0.5L0.5 6.9" stroke="#ffffff" stroke-width="1.1" fill="none"/></svg>
<div style="left:1527px;top:23px;width:197px;height:25.4px;background:#343434;"></div>
<svg style="left:1532px;top:28.4px;" width="14" height="14" viewBox="0 0 14 14"><rect x="0.5" y="0.5" width="13" height="13" fill="#4c4c4c" stroke="#d0d0d0" stroke-width="1"/><circle cx="7" cy="4.4" r="2.5" fill="#e0e0e0"/><circle cx="4.3" cy="9.4" r="2.5" fill="#e0e0e0"/><circle cx="9.7" cy="9.4" r="2.5" fill="#e0e0e0"/></svg>
<div class="t" style="top:27.64px;font-size:12px;color:#f6f6f6;left:1556px;transform:scaleX(0.9864);">Solid Color&nbsp; (Programmer1 (</div>
<svg style="left:1713px;top:33.2px;" width="6.4" height="3.8" viewBox="0 0 6.4 3.8"><path d="M0 0H6.4L3.2 3.8Z" fill="#8a8a8a"/></svg>
<div style="left:1726px;top:23px;width:48px;height:25.4px;background:#343434;"></div>
<div style="left:1737.8px;top:34.8px;width:8.4px;height:1.8px;background:#a8a8a8;"></div>
<svg style="left:1762.5px;top:33.2px;" width="6.4" height="3.8" viewBox="0 0 6.4 3.8"><path d="M0 0H6.4L3.2 3.8Z" fill="#8a8a8a"/></svg>
<div style="left:1777px;top:23px;width:25px;height:25.4px;background:#343434;"></div>
<svg style="left:1783.8px;top:31px;" width="13" height="9.4" viewBox="0 0 13 9.4"><path d="M0 4.6H5" stroke="#f0f0f0" stroke-width="1.1"/><rect x="4.8" y="0" width="1.5" height="9.3" fill="#f0f0f0"/><path fill-rule="evenodd" d="M6.2 1.2H12.2V8.2H6.2Z M6.9 3.3H10.9V4.9H6.9Z" fill="#f0f0f0"/></svg>
<div style="left:1805px;top:23px;width:25px;height:25.4px;background:#0672c3;"></div>
<svg style="left:1809.5px;top:27.3px;" width="16" height="16" viewBox="0 0 16 16"><circle cx="8" cy="8" r="5.2" fill="none" stroke="#eef4fa" stroke-width="1.5"/><path d="M8 0.4V5M8 11V15.6M0.4 8H5M11 8H15.6" stroke="#eef4fa" stroke-width="1.5"/></svg>
<div style="left:1833px;top:23px;width:25px;height:25.4px;background:#0672c3;"></div>
<svg style="left:1838.8px;top:29px;" width="14" height="12" viewBox="0 0 14 12"><rect x="0" y="0" width="2" height="2" fill="#eef4fa"/><rect x="3.6" y="0" width="10" height="2" fill="#eef4fa"/><rect x="0" y="3.1" width="2" height="2" fill="#eef4fa"/><rect x="3.6" y="3.1" width="10" height="2" fill="#eef4fa"/><rect x="0" y="6.2" width="2" height="2" fill="#eef4fa"/><rect x="3.6" y="6.2" width="10" height="2" fill="#eef4fa"/><rect x="0" y="9.3" width="2" height="2" fill="#eef4fa"/><rect x="3.6" y="9.3" width="10" height="2" fill="#eef4fa"/></svg>
<div style="left:1861px;top:23px;width:25px;height:25.4px;background:#343434;"></div>
<svg style="left:1869px;top:28px;" width="10" height="15" viewBox="0 0 10 15"><path d="M5 3V15" stroke="#f0f0f0" stroke-width="1.5"/><path d="M5 0L9.2 5.4H6L5 4.2L4 5.4H0.8Z" fill="#f0f0f0"/><path d="M1 5.2L5 0.8L9 5.2" fill="none" stroke="#f0f0f0" stroke-width="1.4"/></svg>
<div style="left:1889px;top:23px;width:3px;height:25.4px;background:#343434;"></div>
<div style="left:1527px;top:48.4px;width:365px;height:4.2px;background:#111111;"></div>
<div style="left:1713px;top:50.2px;width:2px;height:1.8px;background:#a6a6a6;"></div>
<div style="left:1716.8px;top:50.2px;width:2px;height:1.8px;background:#a6a6a6;"></div>
<div style="left:1720.6px;top:50.2px;width:2px;height:1.8px;background:#a6a6a6;"></div>
<div style="left:1724.4px;top:50.2px;width:2px;height:1.8px;background:#a6a6a6;"></div>
<div style="left:1593px;top:54px;width:50px;height:26px;background:#0672c3;"></div>
<div class="t" style="top:57.64px;font-size:12px;color:#ffffff;left:1605.5px;transform:scaleX(0.9917);">Main</div>
<div class="t" style="top:57.64px;font-size:12px;color:#f4f4f4;left:1655.4px;transform:scaleX(1.0169);">Video</div>
<div class="t" style="top:57.64px;font-size:12px;color:#f4f4f4;left:1710.3px;transform:scaleX(0.9848);">Settings</div>
<div class="t" style="top:57.64px;font-size:12px;color:#f4f4f4;left:1777px;transform:scaleX(1.0242);">Info</div>
<div class="t" style="top:57.64px;font-size:12px;color:#f4f4f4;left:1821.6px;transform:scaleX(1.0192);">All</div>
<div class="t" style="top:86.94px;font-size:12px;color:#c4c4c4;left:1542.7px;transform:scaleX(0.9987);">Duration</div>
<div class="t" style="top:91.24px;font-size:12px;color:#dcdcdc;left:1797px;transform:scaleX(0.9430);">00:00:10:00 | 25</div>
<svg style="left:1531.2px;top:120.8px;" width="6.4" height="3.8" viewBox="0 0 6.4 3.8"><path d="M0 0H6.4L3.2 3.8Z" fill="#9a9a9a"/></svg>
<div class="t" style="top:114.64px;font-size:12px;color:#cacaca;left:1542.3px;transform:scaleX(0.9889);">Background Color</div>
<div style="left:1529px;top:136px;width:363px;height:143px;background:#262626;"></div>
<div style="left:1544px;top:141px;width:61px;height:22px;background:#171717;"></div>
<div class="t" style="top:145.34px;font-size:12px;color:#cfcfcf;left:1548.7px;transform:scaleX(0.8819);">RGBA</div>
<svg style="left:1593.7px;top:150.2px;" width="6.4" height="3.8" viewBox="0 0 6.4 3.8"><path d="M0 0H6.4L3.2 3.8Z" fill="#9a9a9a"/></svg>
<div style="left:1609px;top:141px;width:21px;height:21px;background:#ce1717;box-sizing:border-box;border:1px solid #7a8484;"></div>
<svg style="left:1631.5px;top:141.2px;" width="20" height="20" viewBox="0 0 20 20"><g transform="translate(10 10) rotate(45)" fill="#e2e2e2"><rect x="-2.9" y="-10.4" width="5.8" height="5.6" rx="1.3"/><rect x="-4.3" y="-5" width="8.6" height="2.1"/><path d="M-2.3 -2.9H2.3V6L0.9 8.6V10.6H-0.9V8.6L-2.3 6Z"/><path d="M-2.3 -2.4V5.6" stroke="#262626" stroke-width="0.9" stroke-dasharray="0.9 0.8" fill="none"/><path d="M0.6 -0.6V5.4" stroke="#8a8a8a" stroke-width="0.8" fill="none"/><path d="M-4.3 -2.95H4.3" stroke="#262626" stroke-width="0.5"/></g></svg>
<div class="t" style="top:167.14px;font-size:12px;color:#dcdcdc;left:1545px;font-family:'Liberation Sans',sans-serif;font-weight:700;transform:scaleX(0.9225);">R</div>
<div class="t" style="top:167.14px;font-size:12px;color:#f6f6f6;left:1565px;transform:scaleX(0.9495);">206.000</div>
<div class="t" style="top:188.04px;font-size:12px;color:#dcdcdc;left:1545px;font-family:'Liberation Sans',sans-serif;font-weight:700;transform:scaleX(0.9204);">G</div>
<div class="t" style="top:188.04px;font-size:12px;color:#f6f6f6;left:1565px;transform:scaleX(0.9454);">23.000</div>
<div class="t" style="top:208.84px;font-size:12px;color:#dcdcdc;left:1545px;font-family:'Liberation Sans',sans-serif;font-weight:700;transform:scaleX(0.8533);">B</div>
<div class="t" style="top:208.84px;font-size:12px;color:#f6f6f6;left:1565px;transform:scaleX(0.9454);">23.000</div>
<div class="t" style="top:229.84px;font-size:12px;color:#dcdcdc;left:1545px;font-family:'Liberation Sans',sans-serif;font-weight:700;transform:scaleX(0.9917);">A</div>
<div class="t" style="top:229.84px;font-size:12px;color:#f6f6f6;left:1565px;transform:scaleX(0.9495);">255.000</div>
<div style="left:1655px;top:141px;width:128px;height:128px;background:linear-gradient(0deg,#000,rgba(0,0,0,0)),linear-gradient(90deg,#fff,#ff0000);box-sizing:border-box;border:1px solid #a4a4a4;"></div>
<svg style="left:1762.9px;top:160.2px;" width="12" height="12" viewBox="0 0 12 12"><circle cx="6" cy="6" r="5" fill="none" stroke="#b4b4b4" stroke-width="1.3"/></svg>
<div style="left:1787px;top:141px;width:12px;height:128px;background:linear-gradient(180deg,#ff0000 0,#ff00ff 16.7%,#0000ff 33.3%,#00ffff 50%,#00ff00 66.7%,#ffff00 83.3%,#ff0000 100%);box-sizing:border-box;border:1px solid #7c7c7c;"></div>
<div style="left:1805px;top:141px;width:12px;height:128px;background:linear-gradient(180deg,#ce0000,#d2d2d2);box-sizing:border-box;border:1px solid #7c7c7c;"></div>
<div style="left:1806px;top:155.6px;width:10px;height:2px;background:#f0f0f0;"></div>
<div style="left:1823px;top:141px;width:12px;height:128px;background:linear-gradient(180deg,#ff1c1c,#000000);box-sizing:border-box;border:1px solid #7c7c7c;"></div>
<div style="left:1824px;top:166.4px;width:10px;height:2px;background:#f0f0f0;"></div>
<div style="left:1841px;top:141px;width:12px;height:128px;background:repeating-conic-gradient(#3c3c3c 0 25%,#0a0a0a 0 50%) 0 0/6px 6px;box-sizing:border-box;border:1px solid #7c7c7c;"></div>
<div style="left:1842px;top:142px;width:10px;height:126px;background:linear-gradient(180deg,rgba(190,21,21,1),rgba(150,16,16,.45) 45%,rgba(120,12,12,0));"></div>
<div style="left:1842px;top:141.6px;width:10px;height:2px;background:#f0f0f0;"></div>
<svg style="left:1873px;top:146.6px;" width="11" height="9" viewBox="0 0 12 10"><path d="M4.6 6H9C10.8 6 11.2 4.8 11.2 3.6C11.2 2.2 10.4 1 8.6 1H7.6" fill="none" stroke="#d6d6d6" stroke-width="1.4"/><path d="M0 6L4.8 2.8V9.2Z" fill="#d6d6d6"/></svg>
<div class="t" style="top:285.64px;font-size:12px;color:#cacaca;left:1542.3px;transform:scaleX(0.9835);">Current Version</div>
<div style="left:1656px;top:282px;width:205px;height:21.6px;background:#181818;"></div>
<div class="t" style="top:285.64px;font-size:12px;color:#eaeaea;left:1660px;transform:scaleX(0.9914);">Solid Color</div>
<svg style="left:1850px;top:291.6px;" width="6.4" height="3.8" viewBox="0 0 6.4 3.8"><path d="M0 0H6.4L3.2 3.8Z" fill="#9a9a9a"/></svg>
<div class="t" style="top:309.84px;font-size:12px;color:#cacaca;left:1542.3px;transform:scaleX(0.9420);">Texture Size</div>
<div class="t" style="top:309.84px;font-size:12px;color:#8e8e8e;left:1709.2px;transform:scaleX(0.8483);">X</div>
<div class="t" style="top:309.84px;font-size:12px;color:#f6f6f6;left:1722px;transform:scaleX(0.9328);">1920.000</div>
<div class="t" style="top:309.84px;font-size:12px;color:#8e8e8e;left:1794.3px;transform:scaleX(0.7984);">Y</div>
<div class="t" style="top:309.84px;font-size:12px;color:#f6f6f6;left:1807px;transform:scaleX(0.9268);">1080.000</div>
<svg style="left:1874px;top:315px;" width="11" height="9" viewBox="0 0 12 10"><path d="M4.6 6H9C10.8 6 11.2 4.8 11.2 3.6C11.2 2.2 10.4 1 8.6 1H7.6" fill="none" stroke="#d6d6d6" stroke-width="1.4"/><path d="M0 6L4.8 2.8V9.2Z" fill="#d6d6d6"/></svg>
<div class="t" style="top:614.54px;font-size:12px;color:#d2d2d2;left:11.3px;transform:scaleX(0.9679);">Playback Editor</div>
<svg style="left:102px;top:618.8px;" width="7.6" height="7.6" viewBox="0 0 7.6 7.6"><path d="M0.5 0.5L7.1 7.1M7.1 0.5L0.5 7.1" stroke="#c8c8c8" stroke-width="1.1" fill="none"/></svg>
<div class="t" style="top:614.54px;font-size:12px;color:#d2d2d2;left:121px;transform:scaleX(0.9323);">Playbacks</div>
<svg style="left:182px;top:618.8px;" width="7.6" height="7.6" viewBox="0 0 7.6 7.6"><path d="M0.5 0.5L7.1 7.1M7.1 0.5L0.5 7.1" stroke="#c8c8c8" stroke-width="1.1" fill="none"/></svg>
<svg style="left:1507.8px;top:617.2px;" width="8.2" height="8.2" viewBox="0 0 8.2 8.2"><path d="M0.5 0.5L7.699999999999999 7.699999999999999M7.699999999999999 0.5L0.5 7.699999999999999" stroke="#c8c8c8" stroke-width="1.1" fill="none"/></svg>
<div style="left:8px;top:635px;width:25px;height:25px;background:#0672c3;"></div>
<svg style="left:14px;top:641px;" width="13" height="13" viewBox="0 0 13 13"><path d="M4 2.6A5 5 0 1 0 9 2.6" fill="none" stroke="#fff" stroke-width="1.5"/><path d="M6.5 0.4V6.4" stroke="#fff" stroke-width="1.5"/></svg>
<div style="left:37px;top:636.5px;width:100px;height:21.5px;background:#323232;"></div>
<div class="t" style="top:640.04px;font-size:12px;color:#f4f4f4;left:41.2px;transform:scaleX(0.9534);">[1] Sequence1</div>
<svg style="left:125.5px;top:645.2px;" width="6.4" height="3.8" viewBox="0 0 6.4 3.8"><path d="M0 0H6.4L3.2 3.8Z" fill="#8a8a8a"/></svg>
<div style="left:141px;top:637px;width:100px;height:20px;background:repeating-conic-gradient(#3a3a3a 0 25%,#000000 0 50%) 0 0/6.67px 6.67px;"></div>
<div class="t" style="top:640.04px;font-size:12px;color:#1fb41f;left:167px;transform:scaleX(0.9385);">Sequence1</div>
<div style="left:259px;top:638px;width:18px;height:17.6px;background:#262626;box-sizing:border-box;border:1px solid #7c7c7c;border-radius:2px;"></div>
<div style="left:283px;top:638px;width:18px;height:17.6px;background:#262626;box-sizing:border-box;border:1px solid #7c7c7c;border-radius:2px;"></div>
<div style="left:307px;top:638px;width:18px;height:17.6px;background:#262626;box-sizing:border-box;border:1px solid #7c7c7c;border-radius:2px;"></div>
<svg style="left:264.5px;top:642.4px;" width="8" height="8.8" viewBox="0 0 8 8.8"><path d="M0 0L7.8 4.4L0 8.8Z" fill="#eeeeee"/></svg>
<div style="left:287.9px;top:642px;width:3.1px;height:9px;background:#eeeeee;"></div>
<div style="left:293.1px;top:642px;width:3.1px;height:9px;background:#eeeeee;"></div>
<div style="left:311.9px;top:642px;width:8.3px;height:9px;background:#e6e6e6;"></div>
<div class="t" style="top:637.69px;font-size:18.8px;color:#e8e8e8;left:337.7px;font-family:'Liberation Mono',monospace;line-height:20px;transform:scaleX(0.7025);">00:02:13:19</div>
<div class="t" style="top:637.69px;font-size:18.8px;color:#7e7e7e;left:445px;font-family:'Liberation Mono',monospace;line-height:20px;transform:scaleX(0.6969);">00:00:00:00</div>
<div style="left:584.2px;top:641px;width:1.3px;height:14px;background:#cfa673;"></div>
<div style="left:627px;top:635px;width:30px;height:24px;background:#313131;"></div>
<svg style="left:634.5px;top:641px;" width="15" height="15" viewBox="0 0 15 15"><path d="M0.6 0.6H14.4V8.08L7.5 14.2L0.6 8.08Z" fill="none" stroke="#e4e4e4" stroke-width="1.2"/><path d="M7.5 3.4V8.6M4.9 6H10.1" stroke="#e4e4e4" stroke-width="1.1"/></svg>
<div style="left:667px;top:635px;width:30px;height:24px;background:#313131;"></div>
<svg style="left:673.6px;top:643px;" width="17" height="10" viewBox="0 0 17 10"><path d="M0.6 0.6H7.2V5.22L3.9 9L0.6 5.22Z" fill="none" stroke="#e4e4e4" stroke-width="1.1"/><path d="M8.4 4.8L15.6 0.4V9.2Z" fill="#e4e4e4"/></svg>
<div style="left:702px;top:635px;width:30px;height:24px;background:#313131;"></div>
<svg style="left:708.6px;top:643px;" width="17" height="10" viewBox="0 0 17 10"><path d="M0.4 0.4L7.6 4.8L0.4 9.2Z" fill="#e4e4e4"/><path d="M8.8 0.6H15.4V5.22L12.1 9L8.8 5.22Z" fill="none" stroke="#e4e4e4" stroke-width="1.1"/></svg>
<div style="left:737px;top:636.2px;width:45px;height:21.6px;background:#2e2e2e;"></div>
<svg style="left:770.8px;top:645.2px;" width="6.4" height="3.8" viewBox="0 0 6.4 3.8"><path d="M0 0H6.4L3.2 3.8Z" fill="#8a8a8a"/></svg>
<div style="left:787px;top:635px;width:25px;height:24px;background:#313131;"></div>
<svg style="left:792.4px;top:643px;" width="15" height="10" viewBox="0 0 15 10"><path d="M0 4.6H4" stroke="#e4e4e4" stroke-width="1.5"/><path d="M3 1.6L6.6 4.6L3 7.6Z" fill="#e4e4e4"/><path d="M7.6 0.6H14V5.22L10.8 9L7.6 5.22Z" fill="none" stroke="#e4e4e4" stroke-width="1.1"/></svg>
<div style="left:817px;top:635px;width:25px;height:24px;background:#313131;"></div>
<svg style="left:821.5px;top:640.5px;" width="16" height="14" viewBox="0 0 16 14"><path d="M0.4 3H3.2C6.4 3 7.6 11 10.8 11H12.6M0.4 11H3.2C6.4 11 7.6 3 10.8 3H12.6" fill="none" stroke="#e4e4e4" stroke-width="1.4"/><path d="M12 0.2L15.8 3L12 5.8ZM12 8.2L15.8 11L12 13.8Z" fill="#e4e4e4"/></svg>
<div style="left:852px;top:635px;width:25px;height:24px;background:#313131;"></div>
<svg style="left:857px;top:641px;" width="15" height="12" viewBox="0 0 15 12"><path d="M0 12L5.6 3.6L8.6 8L10.6 5.6L15 12Z" fill="#e4e4e4"/><circle cx="12.2" cy="2" r="1.6" fill="#e4e4e4"/></svg>
<div style="left:887px;top:646.2px;width:95px;height:2.8px;background:#8a8a8a;"></div>
<div style="left:882px;top:642.7px;width:10px;height:10px;background:#ffffff;border-radius:50%;"></div>
<div style="left:990px;top:635px;width:25px;height:24px;background:#313131;"></div>
<svg style="left:995.5px;top:640.6px;" width="14" height="14" viewBox="0 0 14 14"><path d="M3.2 0.6L5.2 2.4L7 0.4L8.8 2.4L10.8 0.6V5.2C10.8 7.4 9 8.6 7 8.6S3.2 7.4 3.2 5.2Z" fill="#e4e4e4"/><path d="M6.4 8H7.6V13.6H6.4Z" fill="#e4e4e4"/><path d="M0.2 6.2C3.4 6.4 5.8 9 6 13.6H3.6C1.4 13.6 0.2 12 0.2 9.8ZM13.8 6.2C10.6 6.4 8.2 9 8 13.6H10.4C12.6 13.6 13.8 12 13.8 9.8Z" fill="#e4e4e4"/></svg>
<div style="left:1025px;top:635px;width:25px;height:24px;background:#313131;"></div>
<svg style="left:1031.4px;top:642.8px;" width="13" height="9.4" viewBox="0 0 13 9.4"><rect x="2.4" y="2.2" width="8.2" height="5" fill="#e4e4e4"/><path d="M2.8 0.5H0.5V3M0.5 6.4V8.9H2.8M10.2 0.5H12.5V3M12.5 6.4V8.9H10.2" fill="none" stroke="#e4e4e4" stroke-width="1"/></svg>
<div style="left:1053px;top:635px;width:25px;height:24px;background:#313131;"></div>
<svg style="left:1058px;top:640.8px;" width="15.4" height="13.4" viewBox="0 0 15.4 13.4"><rect x="3.8" y="4.2" width="7.8" height="5" fill="#e4e4e4"/><path d="M3.6 0.6H0.6V3.8M11.8 0.6H14.8V3.8M3.6 12.8H0.6V9.6M11.8 12.8H14.8V9.6" fill="none" stroke="#e4e4e4" stroke-width="1.1"/></svg>
<div style="left:1088px;top:635px;width:150px;height:24px;background:#313131;"></div>
<svg style="left:1094px;top:643.4px;" width="14" height="8.4" viewBox="0 0 14 8.4"><path d="M4.4 0.6L0.6 4.2L4.4 7.8ZM9.6 0.6L13.4 4.2L9.6 7.8Z" fill="none" stroke="#e4e4e4" stroke-width="0.9"/><circle cx="7" cy="4.2" r="2.3" fill="#e4e4e4"/></svg>
<svg style="left:1119px;top:641.4px;" width="14" height="13" viewBox="0 0 14 13"><path d="M0 1H14M1.6 4.6H12.4M0 8.2H14M1.6 11.8H12.4" stroke="#e4e4e4" stroke-width="1.9"/></svg>
<svg style="left:1144px;top:641px;" width="13" height="14" viewBox="0 0 13 14"><path d="M0.6 0.4H11.4V3.8H0.6ZM1.4 5.2H12.8V8.6H1.4ZM0.6 10H11.4V13.4H0.6Z" fill="#e4e4e4"/></svg>
<svg style="left:1169px;top:641px;" width="14" height="14" viewBox="0 0 14 14"><path d="M0 2.8H7.4M0 6.2H9.4M0 9.6H14M0 13H14" stroke="#e4e4e4" stroke-width="1.9"/><path d="M11.4 0.2V6.2M8.4 3.2H14.4" stroke="#e4e4e4" stroke-width="1.7"/></svg>
<svg style="left:1194px;top:641px;" width="14" height="14" viewBox="0 0 14 14"><path d="M0 1H14M0 4.4H14M0 7.8H9.4M0 11.2H7.4" stroke="#e4e4e4" stroke-width="1.9"/><path d="M11.4 7.8V13.8M8.4 10.8H14.4" stroke="#e4e4e4" stroke-width="1.7"/></svg>
<svg style="left:1218px;top:640px;" width="16" height="15" viewBox="0 0 16 15"><path d="M3 2.6H0.6V12.4H3M12.6 2.6H15.2V12.4H12.6" fill="none" stroke="#e4e4e4" stroke-width="1" stroke-dasharray="2 1.4"/><path d="M7.6 1.4V13.6M4.6 0.6C6.4 0.6 7.6 1 7.6 2.2C7.6 1 8.8 0.6 10.6 0.6M4.6 14.4C6.4 14.4 7.6 14 7.6 12.8C7.6 14 8.8 14.4 10.6 14.4" fill="none" stroke="#e4e4e4" stroke-width="1.3"/></svg>
<div style="left:1287px;top:636px;width:100px;height:22px;background:#333333;"></div>
<div class="t" style="top:639.64px;font-size:12px;color:#f4f4f4;left:1291.3px;transform:scaleX(0.9787);">Programmer1</div>
<svg style="left:1376px;top:645.2px;" width="6.4" height="3.8" viewBox="0 0 6.4 3.8"><path d="M0 0H6.4L3.2 3.8Z" fill="#8a8a8a"/></svg>
<div style="left:1390px;top:636px;width:100px;height:22px;background:#2c2c2c;"></div>
<div class="t" style="top:639.64px;font-size:12px;color:#f4f4f4;left:1395.4px;transform:scaleX(0.9236);">PME1 Live</div>
<svg style="left:1480px;top:645.2px;" width="6.4" height="3.8" viewBox="0 0 6.4 3.8"><path d="M0 0H6.4L3.2 3.8Z" fill="#8a8a8a"/></svg>
<div style="left:1494px;top:636px;width:25px;height:22px;background:#323232;"></div>
<svg style="left:1500.9px;top:643.8px;" width="13" height="9.4" viewBox="0 0 13 9.4"><path d="M0 4.6H5" stroke="#e4e4e4" stroke-width="1.1"/><rect x="4.8" y="0" width="1.5" height="9.3" fill="#e4e4e4"/><path fill-rule="evenodd" d="M6.2 1.2H12.2V8.2H6.2Z M6.9 3.3H10.9V4.9H6.9Z" fill="#e4e4e4"/></svg>
<div style="left:6px;top:684.4px;width:1516px;height:7px;background:repeating-linear-gradient(90deg,rgba(150,150,150,0.55) 0,rgba(150,150,150,0.55) 1px,transparent 1px,transparent 2.53px);"></div>
<div style="left:6px;top:682px;width:1516px;height:9.4px;background:repeating-linear-gradient(90deg,#8c8c8c 0,#8c8c8c 1px,transparent 1px,transparent 12.63px);"></div>
<div style="left:6px;top:677px;width:1516px;height:14.4px;background:repeating-linear-gradient(90deg,#949494 0,#949494 1px,transparent 1px,transparent 37.89px);"></div>
<div style="left:6px;top:662px;width:1516px;height:15px;background:repeating-linear-gradient(90deg,#5e5e5e 0,#5e5e5e 1px,transparent 1px,transparent 75.78px);"></div>
<div style="left:6px;top:677px;width:1516px;height:14.4px;background:repeating-linear-gradient(90deg,#a0a0a0 0,#a0a0a0 1px,transparent 1px,transparent 75.78px);"></div>
<div style="left:6px;top:691px;width:1516px;height:1px;background:#868686;"></div>
<div style="left:1521px;top:662px;width:1px;height:30px;background:#777777;"></div>
<div class="t" style="top:661.38px;font-size:11.6px;color:#ececec;left:8.3px;transform:scaleX(1.0960);">00:00</div>
<div class="t" style="top:661.38px;font-size:11.6px;color:#ececec;left:84.08px;transform:scaleX(1.0960);">00:30</div>
<div class="t" style="top:661.38px;font-size:11.6px;color:#ececec;left:159.85px;transform:scaleX(1.0960);">01:00</div>
<div class="t" style="top:661.38px;font-size:11.6px;color:#ececec;left:235.63px;transform:scaleX(1.0960);">01:30</div>
<div class="t" style="top:661.38px;font-size:11.6px;color:#ececec;left:311.41px;transform:scaleX(1.0960);">02:00</div>
<div class="t" style="top:661.38px;font-size:11.6px;color:#ececec;left:387.19px;transform:scaleX(1.0960);">02:30</div>
<div class="t" style="top:661.38px;font-size:11.6px;color:#ececec;left:462.96px;transform:scaleX(1.0960);">03:00</div>
<div class="t" style="top:661.38px;font-size:11.6px;color:#ececec;left:538.74px;transform:scaleX(1.0960);">03:30</div>
<div class="t" style="top:661.38px;font-size:11.6px;color:#ececec;left:614.52px;transform:scaleX(1.0960);">04:00</div>
<div class="t" style="top:661.38px;font-size:11.6px;color:#ececec;left:690.29px;transform:scaleX(1.0960);">04:30</div>
<div class="t" style="top:661.38px;font-size:11.6px;color:#ececec;left:766.07px;transform:scaleX(1.0960);">05:00</div>
<div class="t" style="top:661.38px;font-size:11.6px;color:#ececec;left:841.85px;transform:scaleX(1.0960);">05:30</div>
<div class="t" style="top:661.38px;font-size:11.6px;color:#ececec;left:917.62px;transform:scaleX(1.0960);">06:00</div>
<div class="t" style="top:661.38px;font-size:11.6px;color:#ececec;left:993.4px;transform:scaleX(1.0960);">06:30</div>
<div class="t" style="top:661.38px;font-size:11.6px;color:#ececec;left:1069.18px;transform:scaleX(1.0960);">07:00</div>
<div class="t" style="top:661.38px;font-size:11.6px;color:#ececec;left:1144.95px;transform:scaleX(1.0960);">07:30</div>
<div class="t" style="top:661.38px;font-size:11.6px;color:#ececec;left:1220.73px;transform:scaleX(1.0960);">08:00</div>
<div class="t" style="top:661.38px;font-size:11.6px;color:#ececec;left:1296.51px;transform:scaleX(1.0960);">08:30</div>
<div class="t" style="top:661.38px;font-size:11.6px;color:#ececec;left:1372.29px;transform:scaleX(1.0960);">09:00</div>
<div class="t" style="top:661.38px;font-size:11.6px;color:#ececec;left:1448.06px;transform:scaleX(1.0960);">09:30</div>
<div class="t" style="top:728.33px;font-size:10px;color:#9a9a9a;left:11.6px;transform:scaleX(0.6472);">1</div>
<div style="left:6px;top:745px;width:197px;height:64px;background:#2e4260;box-sizing:border-box;border:1px solid #1283da;"></div>
<div style="left:7px;top:746px;width:184px;height:17.6px;background:#1b2738;"></div>
<div style="left:191px;top:746px;width:11.4px;height:62px;background:#868686;"></div>
<svg style="left:9px;top:748px;" width="12" height="14.6" viewBox="0 0 12 14.6"><path d="M4.5 0.6H8.4L11.4 3.6V10.4H4.5Z M8.2 0.8V3.8H11.2" fill="none" stroke="#ececec" stroke-width="1.1"/><path d="M4.5 2.6H2.6V12.2H9.4V10.4 M2.6 4.6H0.6V14H7.4V12.2" fill="none" stroke="#ececec" stroke-width="1.1"/></svg>
<div class="t" style="top:745.64px;font-size:12px;color:#ccd0d8;left:26.8px;transform:scaleX(0.9688);">1 Gradient</div>
<div style="left:30.76px;top:746px;width:1.3px;height:17.4px;background:#667080;"></div>
<div style="left:56.02px;top:746px;width:1.3px;height:17.4px;background:#667080;"></div>
<div style="left:81.28px;top:746px;width:1.3px;height:17.4px;background:#667080;"></div>
<div style="left:106.54px;top:746px;width:1.3px;height:17.4px;background:#667080;"></div>
<div style="left:131.8px;top:746px;width:1.3px;height:17.4px;background:#667080;"></div>
<div style="left:157.05px;top:746px;width:1.3px;height:17.4px;background:#667080;"></div>
<div style="left:182.31px;top:746px;width:1.3px;height:17.4px;background:#667080;"></div>
<div style="left:7px;top:764px;width:39px;height:26px;background:linear-gradient(to top right,#ffffff,#000000);"></div>
<div class="t" style="top:748.4px;font-size:10.5px;color:#43203f;left:202.7px;line-height:11px;transform:rotate(90deg) scaleX(0.9263);transform-origin:0 0;-webkit-text-stroke:0;">Canvas1</div>
<div style="left:328px;top:745px;width:13px;height:64px;background:#2e4260;"></div>
<div style="left:328px;top:745px;width:13px;height:19px;background:#1b2738;"></div>
<svg style="left:331px;top:748px;overflow:hidden;" width="10" height="14.6" viewBox="0 0 10 14.6"><path d="M4.5 0.6H8.4L11.4 3.6V10.4H4.5Z M8.2 0.8V3.8H11.2" fill="none" stroke="#ececec" stroke-width="1.1"/><path d="M4.5 2.6H2.6V12.2H9.4V10.4 M2.6 4.6H0.6V14H7.4V12.2" fill="none" stroke="#ececec" stroke-width="1.1"/></svg>
<div style="left:328px;top:763.6px;width:13px;height:26.6px;background:repeating-conic-gradient(#454545 0 25%,#000000 0 50%) 0 0/8px 8px;"></div>
<svg style="left:328px;top:764px;overflow:hidden;" width="13" height="26" viewBox="0 0 13 26"><circle cx="12.9" cy="19.6" r="7" fill="#ececec"/></svg>
<div style="left:341px;top:745px;width:12px;height:64px;background:#868686;"></div>
<div class="t" style="top:748.4px;font-size:10.5px;color:#43203f;left:353.3px;line-height:11px;transform:rotate(90deg) scaleX(0.9263);transform-origin:0 0;-webkit-text-stroke:0;">Canvas1</div>
<div style="left:343.8px;top:684px;width:1.4px;height:303px;background:#2c8ff4;"></div>
<svg style="left:338.4px;top:677px;" width="11" height="9.6" viewBox="0 0 11 9.6"><path d="M0 0H11L5.5 9.6Z" fill="#2c8df2"/></svg>
</body></html>
